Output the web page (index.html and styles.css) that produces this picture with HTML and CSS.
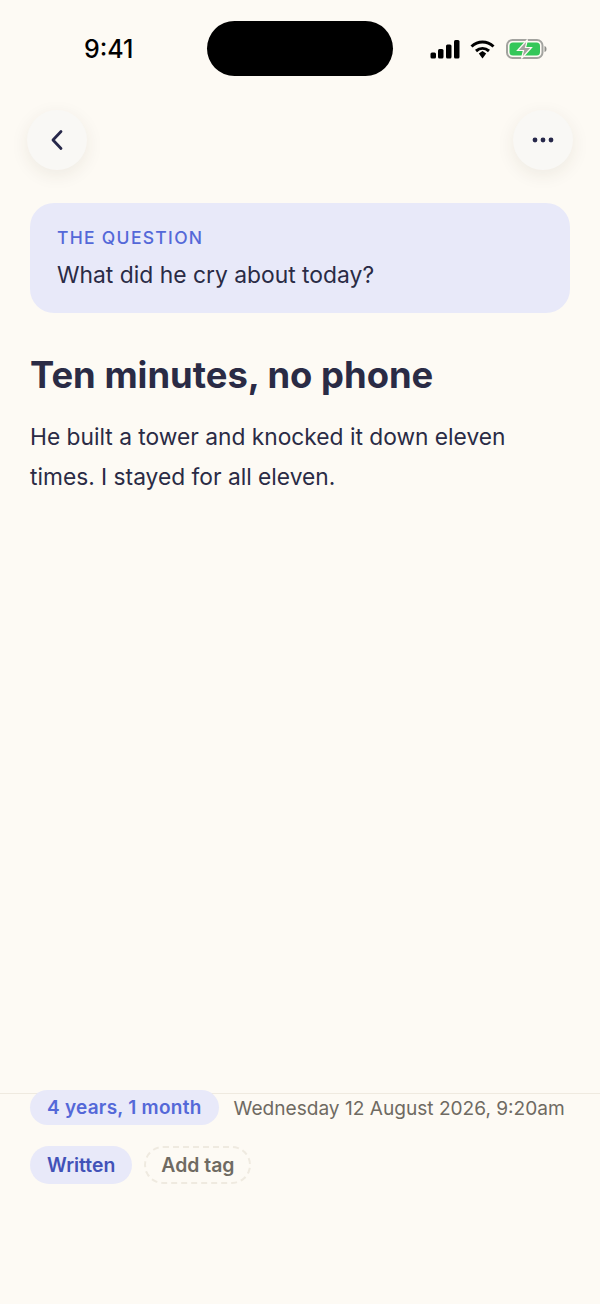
FILE: index.html
```html
<!DOCTYPE html>
<html lang="en">
<head>
  <meta charset="UTF-8" />
  <meta name="viewport" content="width=device-width, initial-scale=1.0"/>
  <title>Ten minutes, no phone</title>
  <link rel="stylesheet" href="styles.css">
</head>
<body>
  <div class="screen">
    <div class="status-bar">
      <span class="time">9:41</span>
      <div class="island"></div>
      <div class="status-icons">
        <svg width="30" height="19" viewBox="0 0 30 19">
          <rect x="0.5" y="12.5" width="5.5" height="6" rx="1.5" fill="#000"/>
          <rect x="8" y="9" width="5.5" height="9.5" rx="1.5" fill="#000"/>
          <rect x="16" y="4.5" width="5.5" height="14" rx="1.5" fill="#000"/>
          <rect x="24" y="0" width="5.5" height="18.5" rx="1.5" fill="#000"/>
        </svg>
        <svg width="25" height="19" viewBox="0 0 25 19">
          <path d="M1.5 6.5 C8 0.5 17 0.5 23.5 6.5" fill="none" stroke="#000" stroke-width="3"/>
          <path d="M6 11 C10 7.5 15 7.5 19 11" fill="none" stroke="#000" stroke-width="3"/>
          <path d="M8.8 13.6 L12.5 10.9 L16.2 13.6 L12.5 18.5 Z" fill="#000"/>
        </svg>
        <svg class="battery" width="41" height="20" viewBox="0 0 41 20">
          <rect x="1" y="1" width="35.5" height="18" rx="5.5" fill="none" stroke="#a3a39f" stroke-width="2"/>
          <rect x="3.5" y="3.5" width="30.5" height="13" rx="3.5" fill="#34c759"/>
          <path d="M38.5 7 C40 7.5 40.5 8.5 40.5 10 C40.5 11.5 40 12.5 38.5 13 Z" fill="#8f8f8b"/>
          <path d="M21.5 0.5 L11.5 11.5 L17.5 11.5 L15.5 19.5 L25.5 8.5 L19.5 8.5 Z" fill="#a3a39f" stroke="#fdfaf4" stroke-width="1.2"/>
        </svg>
      </div>
    </div>

    <div class="nav">
      <button class="round-btn">
        <svg width="14" height="22" viewBox="0 0 14 22">
          <path d="M11 2.5 L3 11 L11 19.5" fill="none" stroke="#27284a" stroke-width="2.8" stroke-linecap="round" stroke-linejoin="round"/>
        </svg>
      </button>
      <button class="round-btn">
        <svg width="22" height="6" viewBox="0 0 22 6">
          <circle cx="3" cy="3" r="2.4" fill="#27284a"/>
          <circle cx="11" cy="3" r="2.4" fill="#27284a"/>
          <circle cx="19" cy="3" r="2.4" fill="#27284a"/>
        </svg>
      </button>
    </div>

    <div class="question">
      <div class="question-label">THE QUESTION</div>
      <div class="question-text">What did he cry about today?</div>
    </div>

    <h1>Ten minutes, no phone</h1>
    <p class="entry">He built a tower and knocked it down eleven times. I stayed for all eleven.</p>

    <div class="footer">
      <div class="meta-row">
        <span class="pill pill-age">4 years, 1 month</span>
        <span class="date">Wednesday 12 August 2026, 9:20am</span>
      </div>
      <div class="tag-row">
        <span class="tag tag-written">Written</span>
        <span class="tag tag-add">Add tag</span>
      </div>
    </div>
  </div>
</body>
</html>
```

FILE: styles.css
```css
* {
  box-sizing: border-box;
}

body {
  margin: 0;
  background-color: #fdfaf4;
  font-family: Inter, "Liberation Sans", sans-serif;
  color: #2a2b45;
}

.screen {
  width: 600px;
  height: 1304px;
  display: flex;
  flex-direction: column;
  overflow: hidden;
}

.status-bar {
  height: 110px;
  flex-shrink: 0;
  display: flex;
  align-items: flex-start;
  padding-top: 21px;
}

.time {
  width: 207px;
  padding-left: 84px;
  padding-top: 1px;
  font-size: 25px;
  font-weight: 550;
  line-height: 55px;
  color: #000;
}

.island {
  width: 186px;
  height: 55px;
  border-radius: 28px;
  background-color: #000;
}

.status-icons {
  margin-left: 37px;
  margin-top: 18px;
  display: flex;
  align-items: center;
  gap: 10px;
}

.battery {
  margin-left: 1px;
}

.nav {
  display: flex;
  justify-content: space-between;
  padding: 0 27px;
  flex-shrink: 0;
}

.round-btn {
  width: 60px;
  height: 60px;
  padding: 0;
  border: none;
  border-radius: 50%;
  background-color: #f9f8f5;
  box-shadow: 0 5px 18px rgba(60, 50, 30, 0.08);
  display: flex;
  align-items: center;
  justify-content: center;
}

.question {
  margin: 33px 30px 0;
  height: 110px;
  padding: 25px 27px 0;
  border-radius: 24px;
  background-color: #e8e9f9;
  flex-shrink: 0;
}

.question-label {
  font-size: 17.5px;
  font-weight: 500;
  line-height: 20px;
  letter-spacing: 1.3px;
  color: #5468d8;
}

.question-text {
  margin-top: 11px;
  font-size: 22.85px;
  line-height: 32px;
}

h1 {
  margin: 40px 30px 0;
  font-size: 36.4px;
  font-weight: 700;
  line-height: 44px;
}

.entry {
  margin: 20px 30px 0;
  font-size: 22.75px;
  line-height: 40px;
}

.footer {
  margin-top: auto;
  height: 211px;
  flex-shrink: 0;
  border-top: 1px solid #efeae0;
  padding: 0 30px;
}

.meta-row {
  margin-top: -4px;
  display: flex;
  align-items: center;
  gap: 16px;
}

.pill {
  height: 35px;
  padding: 0 17px;
  border-radius: 18px;
  background-color: #e8e9f9;
  color: #5468d8;
  font-size: 19px;
  font-weight: 600;
  line-height: 35px;
  letter-spacing: 0.25px;
}

.date {
  margin-left: -1px;
  font-size: 19.1px;
  color: #6f6a62;
  white-space: nowrap;
}

.tag-row {
  margin-top: 21px;
  display: flex;
  gap: 12px;
}

.tag {
  height: 38px;
  padding: 0 17px;
  border-radius: 19px;
  font-size: 19.4px;
  font-weight: 600;
  line-height: 38px;
}

.tag-written {
  background-color: #e8e9f9;
  color: #4252b8;
}

.tag-add {
  padding: 0 15px;
  border: 2px dashed #efeae0;
  color: #6f6a62;
  line-height: 35px;
}
```
